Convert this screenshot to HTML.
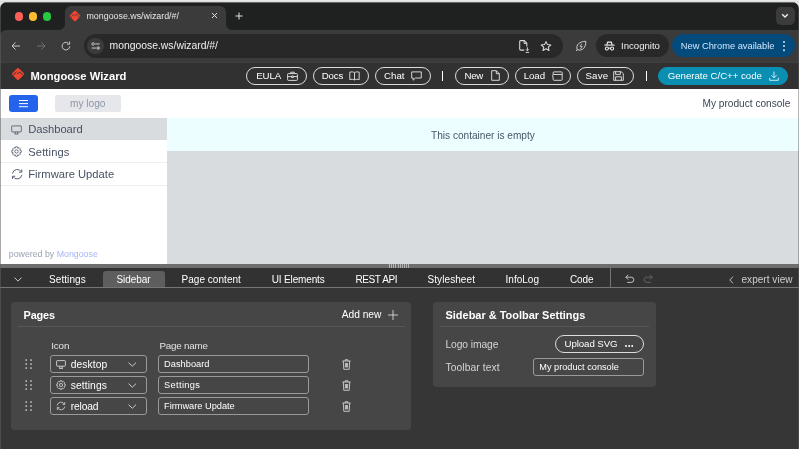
<!DOCTYPE html>
<html lang="en">
<head>
<meta charset="utf-8">
<title>Mongoose Wizard</title>
<style>
*{box-sizing:border-box;margin:0;padding:0}
html,body{width:799px;height:449px;overflow:hidden;background:linear-gradient(#e9e9e9 0 1px,#dcdcdc 1px 2px,#e4e4e4 2px);font-family:"Liberation Sans",sans-serif}
.abs{position:absolute}
#win{position:absolute;left:0;top:2px;width:799px;height:447px;background:#1f2120;border-radius:7px 7px 0 0;overflow:hidden}
#win:after{content:'';position:absolute;left:0;top:0;width:799px;height:1px;background:rgba(150,150,150,.62)}
.edge{position:absolute;top:0;width:1px;height:447px;background:rgba(95,95,95,.55)}
#shift{position:absolute;left:0;top:-2px;width:799px;height:449px;will-change:transform}
.t{position:absolute;white-space:nowrap;line-height:1}
svg{position:absolute;overflow:visible}
</style>
</head>
<body>
<div id="win"><div id="shift">
<div class="abs" style="left:14.75px;top:12px;width:8.5px;height:8.5px;border-radius:50%;background:#fe5f57"></div>
<div class="abs" style="left:28.75px;top:12px;width:8.5px;height:8.5px;border-radius:50%;background:#febc2e"></div>
<div class="abs" style="left:42.5px;top:12px;width:8.5px;height:8.5px;border-radius:50%;background:#28c840"></div>
<div class="abs" style="left:0px;top:29.5px;width:799px;height:32.5px;background:#3b3b3b;border-radius:6px 0 0 0"></div>
<div class="abs" style="left:64.5px;top:6px;width:161.0px;height:25px;background:#3b3b3b;border-radius:6px 6px 0 0"></div>
<svg style="left:58.5px;top:23.5px" width="6" height="6" viewBox="0 0 6 6"><path d="M6 0 V6 H0 A6 6 0 0 0 6 0Z" fill="#3b3b3b"/></svg>
<svg style="left:225.5px;top:23.5px" width="6" height="6" viewBox="0 0 6 6"><path d="M0 0 V6 H6 A6 6 0 0 1 0 0Z" fill="#3b3b3b"/></svg>
<svg style="left:69.45px;top:9.9px" width="12" height="12" viewBox="-6 -6 12 12"><rect x="-4.1" y="-4.1" width="8.2" height="8.2" rx="1.2" transform="rotate(45)" fill="#ee4630"/><path d="M-4.6 1.3 L-1.3 -1.8 M-0.8 0 L1.5 -1.8 L4.3 1" fill="none" stroke="#3b3b3b" stroke-width="0.9"/></svg>
<div class="t" style="left:86.5px;top:12.34px;font-size:8.85px;color:#e6e6e6;font-weight:normal;letter-spacing:0.001px;">mongoose.ws/wizard/#/</div>
<svg style="left:211px;top:12.3px" width="7" height="7" viewBox="0 0 7 7"><path d="M1 1 L6 6 M6 1 L1 6" stroke="#e0e0e0" stroke-width="1" fill="none"/></svg>
<svg style="left:235px;top:11.7px" width="8" height="8" viewBox="0 0 8 8"><path d="M4 0.5 V7.5 M0.5 4 H7.5" stroke="#e0e0e0" stroke-width="1" fill="none"/></svg>
<div class="abs" style="left:775.5px;top:6.5px;width:19.0px;height:18.5px;background:#3b3b3b;border-radius:5px"></div>
<svg style="left:781px;top:13px" width="8" height="6" viewBox="0 0 8 6"><path d="M1.2 1.2 L4 4 L6.8 1.2" fill="none" stroke="#eee" stroke-width="1.3"/></svg>
<svg style="left:9.8px;top:39.7px" width="12" height="12" viewBox="0 0 12 12"><path d="M10 6 H2.2 M5.6 2.4 L2 6 L5.6 9.6" fill="none" stroke="#cdcdcd" stroke-width="0.95"/></svg>
<svg style="left:35px;top:39.7px" width="12" height="12" viewBox="0 0 12 12"><path d="M2 6 H9.8 M6.4 2.4 L10 6 L6.4 9.6" fill="none" stroke="#727272" stroke-width="0.95"/></svg>
<svg style="left:60px;top:39.7px" width="12" height="12" viewBox="0 0 12 12"><path d="M9.7 6.3 A3.8 3.8 0 1 1 8.3 3.2" fill="none" stroke="#cdcdcd" stroke-width="0.95"/><path d="M9.6 1.6 V4.2 H7" fill="none" stroke="#cdcdcd" stroke-width="0.95"/></svg>
<div class="abs" style="left:84px;top:34px;width:479px;height:24px;background:#282828;border-radius:12px"></div>
<div class="abs" style="left:87.2px;top:37.6px;width:16.6px;height:16.6px;border-radius:50%;background:#3b3b3b"></div>
<svg style="left:90.8px;top:41.7px" width="9.4" height="8" viewBox="0 0 12 10"><circle cx="2.7" cy="2.4" r="1.6" fill="none" stroke="#e0e0e0" stroke-width="1"/><path d="M5.4 2.4 H11.2" stroke="#e0e0e0" stroke-width="1.1"/><circle cx="9.2" cy="7.6" r="1.6" fill="none" stroke="#e0e0e0" stroke-width="1"/><circle cx="9.2" cy="7.6" r="0.8" fill="#e0e0e0"/><path d="M0.8 7.6 H6.6" stroke="#e0e0e0" stroke-width="1.1"/></svg>
<div class="t" style="left:109.5px;top:41.49px;font-size:10.38px;color:#f0f0f0;font-weight:normal;letter-spacing:0.002px;">mongoose.ws/wizard/#/</div>
<svg style="left:518px;top:39px" width="13" height="15" viewBox="0 0 13 15"><path d="M8.8 7.4 V4.3 L6.3 1.6 H2.7 Q1.7 1.6 1.7 2.6 V10.1 Q1.7 11.1 2.7 11.1 H6.2" fill="none" stroke="#dcdcdc" stroke-width="1.05"/><path d="M6.1 1.8 V4.5 H8.7" fill="none" stroke="#dcdcdc" stroke-width="0.9"/><path d="M9.4 8.3 V11.6 M7.9 10.3 L9.4 11.8 L10.9 10.3 M7.7 13.4 H11.1" fill="none" stroke="#dcdcdc" stroke-width="0.95"/></svg>
<svg style="left:539.8px;top:39.8px" width="12" height="12" viewBox="0 0 12 12"><path d="M6 1.6 L7.4 4.6 L10.8 5 L8.3 7.2 L9 10.5 L6 8.8 L3 10.5 L3.7 7.2 L1.2 5 L4.6 4.6 Z" fill="none" stroke="#dcdcdc" stroke-width="1.05" stroke-linejoin="round"/></svg>
<svg style="left:574.7px;top:39.9px" width="12" height="12" viewBox="0 0 12 12"><path d="M2.2 9.6 C0.6 5 4.4 1.4 10.8 1.3 C11 7.8 7.2 11.4 2.2 9.6 Z M2.6 9.3 L1 11" fill="none" stroke="#cfcfcf" stroke-width="1"/><path d="M6.9 3.8 L5 6.4 H7.2 L5.4 9" fill="none" stroke="#cfcfcf" stroke-width="0.85"/></svg>
<div class="abs" style="left:596px;top:34px;width:72.5px;height:23.200000000000003px;background:#282828;border-radius:12px"></div>
<svg style="left:604.3px;top:40.9px" width="11" height="10" viewBox="0 0 11 10"><path d="M0.4 4.1 H10.6" fill="none" stroke="#eee" stroke-width="1.1"/><path d="M2.9 3.8 L3.6 1.2 H7.4 L8.1 3.8" fill="none" stroke="#eee" stroke-width="1.2" stroke-linejoin="round"/><circle cx="2.9" cy="7.5" r="1.55" fill="none" stroke="#eee" stroke-width="1.05"/><circle cx="8.1" cy="7.5" r="1.55" fill="none" stroke="#eee" stroke-width="1.05"/><path d="M4.4 7.1 H6.6" stroke="#eee" stroke-width="1"/></svg>
<div class="t" style="left:621px;top:41.42px;font-size:9.61px;color:#f0f0f0;font-weight:normal;letter-spacing:-0.000px;">Incognito</div>
<div class="abs" style="left:672px;top:34px;width:122.5px;height:23.200000000000003px;background:#044a7a;border-radius:12px"></div>
<div class="t" style="left:680.75px;top:42.08px;font-size:9.32px;color:#cfe6ff;font-weight:normal;letter-spacing:-0.001px;">New Chrome available</div>
<div class="abs" style="left:782.5px;top:40.8px;width:2.1px;height:2.1px;border-radius:1.1px;background:#cfe6ff;box-shadow:0 4.1px 0 #cfe6ff,0 8.2px 0 #cfe6ff"></div>
<div class="abs" style="left:0px;top:62px;width:799px;height:26.599999999999994px;background:#313131;border-top:1px solid #3f3f3f"></div>
<svg style="left:10.2px;top:66.45px" width="16" height="16" viewBox="-8 -8 16 16"><rect x="-4.7" y="-4.7" width="9.4" height="9.4" rx="1.5" transform="rotate(45)" fill="#ee4630"/><path d="M-5.25 1.45 L-1.5 -2.05 M-0.9 0 L1.7 -2.05 L4.9 1.15" fill="none" stroke="#313131" stroke-width="1"/></svg>
<div class="t" style="left:30.5px;top:70.76px;font-size:11.23px;color:#fff;font-weight:bold;letter-spacing:0.002px;">Mongoose Wizard</div>
<div class="abs" style="left:246px;top:67px;width:61px;height:17.5px;border-radius:9px;border:1px solid #dcdcdc"></div>
<div class="t" style="left:256.25px;top:70.77px;font-size:9.7px;color:#fff;font-weight:normal;letter-spacing:-0.147px;">EULA</div>
<div class="abs" style="left:312.5px;top:67px;width:56.5px;height:17.5px;border-radius:9px;border:1px solid #dcdcdc"></div>
<div class="t" style="left:321.75px;top:70.77px;font-size:9.7px;color:#fff;font-weight:normal;letter-spacing:-0.150px;">Docs</div>
<div class="abs" style="left:374.5px;top:67px;width:56.0px;height:17.5px;border-radius:9px;border:1px solid #dcdcdc"></div>
<div class="t" style="left:384px;top:70.77px;font-size:9.7px;color:#fff;font-weight:normal;letter-spacing:0.003px;">Chat</div>
<div class="abs" style="left:442px;top:70.5px;width:1px;height:10.5px;background:#fff;"></div>
<div class="abs" style="left:455px;top:67px;width:54px;height:17.5px;border-radius:9px;border:1px solid #dcdcdc"></div>
<div class="t" style="left:464.5px;top:70.77px;font-size:9.7px;color:#fff;font-weight:normal;letter-spacing:-0.302px;">New</div>
<div class="abs" style="left:514.5px;top:67px;width:56.5px;height:17.5px;border-radius:9px;border:1px solid #dcdcdc"></div>
<div class="t" style="left:523.75px;top:70.77px;font-size:9.7px;color:#fff;font-weight:normal;letter-spacing:-0.082px;">Load</div>
<div class="abs" style="left:576.5px;top:67px;width:57.0px;height:17.5px;border-radius:9px;border:1px solid #dcdcdc"></div>
<div class="t" style="left:585.5px;top:70.77px;font-size:9.7px;color:#fff;font-weight:normal;letter-spacing:0.160px;">Save</div>
<div class="abs" style="left:645.5px;top:70.5px;width:1.0px;height:10.5px;background:#fff;"></div>
<div class="abs" style="left:658px;top:67px;width:130px;height:17.5px;border-radius:9px;background:#0a8fb3;border:1px solid #0a8fb3"></div>
<div class="t" style="left:667.75px;top:70.77px;font-size:9.7px;color:#fff;font-weight:normal;letter-spacing:-0.034px;">Generate C/C++ code</div>
<svg style="left:287px;top:70.5px" width="11" height="10" viewBox="0 0 11 10"><rect x="0.6" y="2.6" width="9.8" height="6.8" rx="0.8" fill="none" stroke="#e8e8e8" stroke-width="0.9"/><path d="M3.8 2.6 V1.2 H7.2 V2.6 M0.6 5.6 H4.6 M6.4 5.6 H10.4 M4.6 5 H6.4 V6.6 H4.6Z" fill="none" stroke="#e8e8e8" stroke-width="0.9"/></svg>
<svg style="left:349px;top:70.5px" width="11" height="10" viewBox="0 0 11 10"><path d="M5.5 1.6 C4.4 0.8 2.4 0.7 0.8 1.2 V8.6 C2.4 8.1 4.4 8.2 5.5 9 C6.6 8.2 8.6 8.1 10.2 8.6 V1.2 C8.6 0.7 6.6 0.8 5.5 1.6 V9" fill="none" stroke="#e8e8e8" stroke-width="0.9"/></svg>
<svg style="left:410.5px;top:70.5px" width="11" height="10" viewBox="0 0 11 10"><path d="M0.7 0.9 H10.3 V7 H4.4 L2.2 9.2 V7 H0.7Z" fill="none" stroke="#e8e8e8" stroke-width="0.9" stroke-linejoin="round"/></svg>
<svg style="left:490.5px;top:70px" width="9" height="11" viewBox="0 0 9 11"><path d="M0.7 0.7 H5.3 L8.3 3.7 V10.3 H0.7Z M5.3 0.7 V3.7 H8.3" fill="none" stroke="#e8e8e8" stroke-width="0.9" stroke-linejoin="round"/></svg>
<svg style="left:551.5px;top:70.5px" width="11" height="10" viewBox="0 0 11 10"><path d="M1.2 3.5 V1.7 Q1.2 0.9 2 0.9 H9.4 Q10.2 0.9 10.2 1.7 V8.5 Q10.2 9.3 9.4 9.3 H2.1 Q1.3 9.3 1.2 8.5 L0.7 4.3 Q0.6 3.5 1.4 3.5 H10.2" fill="none" stroke="#e8e8e8" stroke-width="0.9" stroke-linejoin="round"/></svg>
<svg style="left:613.3px;top:70.5px" width="11" height="10" viewBox="0 0 11 10"><path d="M0.7 0.7 H8.3 L10.3 2.7 V9.3 H0.7Z M2.6 0.7 V3.4 H7.4 V0.7 M2.6 9.3 V5.8 H8.4 V9.3" fill="none" stroke="#e8e8e8" stroke-width="0.9" stroke-linejoin="round"/></svg>
<svg style="left:768.5px;top:70.5px" width="10" height="10" viewBox="0 0 10 10"><path d="M5 0.6 V6.6 M2.4 4.2 L5 6.8 L7.6 4.2 M0.7 6.8 V9.3 H9.3 V6.8" fill="none" stroke="#fff" stroke-width="0.8"/></svg>
<div class="abs" style="left:0px;top:88.6px;width:799px;height:29.400000000000006px;background:#fff;"></div>
<div class="abs" style="left:9px;top:95px;width:28.75px;height:17px;background:#2563eb;border-radius:3px"></div>
<div class="abs" style="left:18.75px;top:99.6px;width:9.25px;height:1px;background:#fff;box-shadow:0 3.1px 0 #fff,0 6.2px 0 #fff"></div>
<div class="abs" style="left:54.5px;top:95.25px;width:66.5px;height:16.25px;background:#e5e7eb;border-radius:2px"></div>
<div class="t" style="left:70px;top:98.62px;font-size:10.14px;color:#8d96a5;font-weight:normal;letter-spacing:-0.001px;">my logo</div>
<div class="t" style="left:702.5px;top:98.92px;font-size:10.15px;color:#3d4656;font-weight:normal;letter-spacing:-0.001px;">My product console</div>
<div class="abs" style="left:0px;top:118px;width:167px;height:146px;background:#fff;"></div>
<div class="abs" style="left:167px;top:118px;width:632px;height:146px;background:#d8dcdf;"></div>
<div class="abs" style="left:167px;top:118px;width:632px;height:33.400000000000006px;background:#ecfeff;"></div>
<div class="t" style="left:431px;top:130.64px;font-size:10.11px;color:#4a5568;font-weight:normal;letter-spacing:0.002px;">This container is empty</div>
<div class="abs" style="left:0px;top:118px;width:167px;height:22.19999999999999px;background:#d8dcdf;"></div>
<div class="abs" style="left:0px;top:162px;width:167px;height:1px;background:#eceef1;"></div>
<div class="abs" style="left:0px;top:184.7px;width:167px;height:1.0px;background:#eceef1;"></div>
<div class="t" style="left:28.25px;top:124.03px;font-size:11.2px;color:#465062;font-weight:normal;letter-spacing:-0.032px;">Dashboard</div>
<div class="t" style="left:28.25px;top:146.78px;font-size:11.2px;color:#465062;font-weight:normal;letter-spacing:0.098px;">Settings</div>
<div class="t" style="left:28.25px;top:169.28px;font-size:11.2px;color:#465062;font-weight:normal;letter-spacing:0.007px;">Firmware Update</div>
<svg style="left:11.4px;top:124.6px" width="11" height="10" viewBox="0 0 11 10"><rect x="0.7" y="0.9" width="9.6" height="6" rx="0.4" fill="none" stroke="#525c6e" stroke-width="0.85"/><path d="M3.6 9 H7.4 M4.2 6.9 V9 M6.8 6.9 V9" fill="none" stroke="#525c6e" stroke-width="0.85"/></svg>
<svg style="left:11.3px;top:146.1px" width="11" height="11" viewBox="0 0 11 11"><circle cx="5.5" cy="5.5" r="1.7" fill="none" stroke="#525c6e" stroke-width="0.85"/><path d="M4.6 0.8 H6.4 L6.8 2.2 L8.1 1.6 L9.4 2.9 L8.8 4.2 L10.2 4.6 V6.4 L8.8 6.8 L9.4 8.1 L8.1 9.4 L6.8 8.8 L6.4 10.2 H4.6 L4.2 8.8 L2.9 9.4 L1.6 8.1 L2.2 6.8 L0.8 6.4 V4.6 L2.2 4.2 L1.6 2.9 L2.9 1.6 L4.2 2.2Z" fill="none" stroke="#525c6e" stroke-width="0.85" stroke-linejoin="round"/></svg>
<svg style="left:10.8px;top:168.3px" width="12.4" height="12.4" viewBox="0 0 11 11"><path d="M1.3 4.9 A4.3 4.3 0 0 1 9.3 3.5 M9.7 6.1 A4.3 4.3 0 0 1 1.7 7.5" fill="none" stroke="#525c6e" stroke-width="0.85"/><path d="M9.6 1.3 V3.7 H7.2 M1.4 9.7 V7.3 H3.8" fill="none" stroke="#525c6e" stroke-width="0.85"/></svg>
<div class="t" style="left:8.75px;top:250.12px;font-size:8.8px;color:#9aa2b1">powered by <span style="color:#a5b4fc">Mongoose</span></div>
<div class="abs" style="left:0px;top:263.8px;width:799px;height:4.199999999999989px;background:#6e6e6e;"></div>
<div class="abs" style="left:389px;top:264px;width:21.4px;height:3.8px;background:repeating-linear-gradient(90deg,#b4b4b4 0 1.07px,transparent 1.07px 2.14px)"></div>
<div class="abs" style="left:0px;top:268px;width:799px;height:20px;background:#323232;border-bottom:1px solid #767676"></div>
<div class="abs" style="left:0px;top:288px;width:799px;height:161px;background:#363636;"></div>
<div class="abs" style="left:103px;top:271.3px;width:61.5px;height:15.699999999999989px;background:#5e5e5e;border-radius:3px 3px 0 0"></div>
<div class="t" style="left:49px;top:275.30px;font-size:10px;color:#fff;font-weight:normal;letter-spacing:0.077px;">Settings</div>
<div class="t" style="left:116.5px;top:275.30px;font-size:10px;color:#fff;font-weight:normal;letter-spacing:-0.067px;">Sidebar</div>
<div class="t" style="left:181.5px;top:275.30px;font-size:10px;color:#fff;font-weight:normal;letter-spacing:0.039px;">Page content</div>
<div class="t" style="left:271.7px;top:275.30px;font-size:10px;color:#fff;font-weight:normal;letter-spacing:-0.142px;">UI Elements</div>
<div class="t" style="left:355.4px;top:275.30px;font-size:10px;color:#fff;font-weight:normal;letter-spacing:-0.392px;">REST API</div>
<div class="t" style="left:427.5px;top:275.30px;font-size:10px;color:#fff;font-weight:normal;letter-spacing:0.081px;">Stylesheet</div>
<div class="t" style="left:505.5px;top:275.30px;font-size:10px;color:#fff;font-weight:normal;letter-spacing:0.019px;">InfoLog</div>
<div class="t" style="left:570px;top:275.30px;font-size:10px;color:#fff;font-weight:normal;letter-spacing:-0.102px;">Code</div>
<svg style="left:14px;top:276.5px" width="8" height="5" viewBox="0 0 8 5"><path d="M0.5 0.6 L4 4.1 L7.5 0.6" fill="none" stroke="#d8d8d8" stroke-width="0.9"/></svg>
<div class="abs" style="left:610px;top:268px;width:1px;height:19.5px;background:#767676;"></div>
<svg style="left:625px;top:274px" width="10" height="9" viewBox="0 0 10 9"><path d="M3.2 0.8 L0.8 3.2 L3.2 5.6 M0.8 3.2 H6.2 A2.6 2.6 0 0 1 6.2 8.4 H2.2" fill="none" stroke="#d0d0d0" stroke-width="0.9"/></svg>
<svg style="left:643px;top:274px" width="10" height="9" viewBox="0 0 10 9"><path d="M6.8 0.8 L9.2 3.2 L6.8 5.6 M9.2 3.2 H3.8 A2.6 2.6 0 0 0 3.8 8.4 H7.8" fill="none" stroke="#666" stroke-width="0.9"/></svg>
<svg style="left:728.5px;top:275.5px" width="5" height="8" viewBox="0 0 5 8"><path d="M4 0.6 L0.8 4 L4 7.4" fill="none" stroke="#cfcfcf" stroke-width="0.9"/></svg>
<div class="t" style="left:741.5px;top:275.30px;font-size:10px;color:#cfcfcf;font-weight:normal;letter-spacing:0.039px;">expert view</div>
<div class="abs" style="left:11.3px;top:301.5px;width:400.2px;height:128.3px;background:#464646;border-radius:4px"></div>
<div class="t" style="left:23.5px;top:309.80px;font-size:10.9px;color:#fff;font-weight:bold;letter-spacing:-0.123px;">Pages</div>
<div class="abs" style="left:18px;top:326.4px;width:386.7px;height:1.0px;background:#575757;"></div>
<div class="t" style="left:341.7px;top:310.39px;font-size:10.2px;color:#fff;font-weight:normal;letter-spacing:0.001px;">Add new</div>
<svg style="left:388.1px;top:309.6px" width="10" height="10" viewBox="0 0 10 10"><path d="M5 0 V10 M0 5 H10" stroke="#e8e8e8" stroke-width="0.8" fill="none"/></svg>
<div class="t" style="left:51.25px;top:341.31px;font-size:9.8px;color:#e4e4e4;font-weight:normal;letter-spacing:-0.131px;">Icon</div>
<div class="t" style="left:159.5px;top:341.31px;font-size:9.8px;color:#e4e4e4;font-weight:normal;letter-spacing:-0.203px;">Page name</div>
<div class="abs" style="left:49.5px;top:355px;width:97.5px;height:18.19999999999999px;background:transparent;border:1px solid #9a9a9a;border-radius:3px"></div>
<div class="abs" style="left:158px;top:355px;width:151px;height:18.19999999999999px;background:transparent;border:1px solid #9a9a9a;border-radius:3px"></div>
<div class="t" style="left:70.8px;top:359.73px;font-size:10.3px;color:#fff;font-weight:normal;letter-spacing:0.054px;">desktop</div>
<div class="t" style="left:164px;top:360.32px;font-size:9.25px;color:#fff;font-weight:normal;letter-spacing:0.028px;">Dashboard</div>
<svg style="left:128px;top:362.2px" width="9" height="5" viewBox="0 0 9 5"><path d="M0.5 0.6 L4.3 4.2 L8.1 0.6" fill="none" stroke="#d8d8d8" stroke-width="0.9"/></svg>
<svg style="left:24px;top:358.2px" width="10" height="12" viewBox="0 0 10 12"><circle cx="2.2" cy="2.0" r="0.85" fill="#e0e0e0"/><circle cx="2.2" cy="6.0" r="0.85" fill="#e0e0e0"/><circle cx="2.2" cy="10.0" r="0.85" fill="#e0e0e0"/><circle cx="7.0" cy="2.0" r="0.85" fill="#e0e0e0"/><circle cx="7.0" cy="6.0" r="0.85" fill="#e0e0e0"/><circle cx="7.0" cy="10.0" r="0.85" fill="#e0e0e0"/></svg>
<svg style="left:342.4px;top:358.7px" width="9" height="11" viewBox="0 0 9 11"><path d="M0.4 2 H8.6 M3.2 2 V0.7 H5.8 V2 M1.3 2 L1.8 10.3 H7.2 L7.7 2 M3.4 4 V8.4 M4.5 4 V8.4 M5.6 4 V8.4" fill="none" stroke="#e0e0e0" stroke-width="0.8"/></svg>
<div class="abs" style="left:49.5px;top:376px;width:97.5px;height:18.19999999999999px;background:transparent;border:1px solid #9a9a9a;border-radius:3px"></div>
<div class="abs" style="left:158px;top:376px;width:151px;height:18.19999999999999px;background:transparent;border:1px solid #9a9a9a;border-radius:3px"></div>
<div class="t" style="left:70.8px;top:380.73px;font-size:10.3px;color:#fff;font-weight:normal;letter-spacing:0.088px;">settings</div>
<div class="t" style="left:164px;top:381.32px;font-size:9.25px;color:#fff;font-weight:normal;letter-spacing:0.360px;">Settings</div>
<svg style="left:128px;top:383.2px" width="9" height="5" viewBox="0 0 9 5"><path d="M0.5 0.6 L4.3 4.2 L8.1 0.6" fill="none" stroke="#d8d8d8" stroke-width="0.9"/></svg>
<svg style="left:24px;top:379.2px" width="10" height="12" viewBox="0 0 10 12"><circle cx="2.2" cy="2.0" r="0.85" fill="#e0e0e0"/><circle cx="2.2" cy="6.0" r="0.85" fill="#e0e0e0"/><circle cx="2.2" cy="10.0" r="0.85" fill="#e0e0e0"/><circle cx="7.0" cy="2.0" r="0.85" fill="#e0e0e0"/><circle cx="7.0" cy="6.0" r="0.85" fill="#e0e0e0"/><circle cx="7.0" cy="10.0" r="0.85" fill="#e0e0e0"/></svg>
<svg style="left:342.4px;top:379.7px" width="9" height="11" viewBox="0 0 9 11"><path d="M0.4 2 H8.6 M3.2 2 V0.7 H5.8 V2 M1.3 2 L1.8 10.3 H7.2 L7.7 2 M3.4 4 V8.4 M4.5 4 V8.4 M5.6 4 V8.4" fill="none" stroke="#e0e0e0" stroke-width="0.8"/></svg>
<div class="abs" style="left:49.5px;top:397px;width:97.5px;height:18.19999999999999px;background:transparent;border:1px solid #9a9a9a;border-radius:3px"></div>
<div class="abs" style="left:158px;top:397px;width:151px;height:18.19999999999999px;background:transparent;border:1px solid #9a9a9a;border-radius:3px"></div>
<div class="t" style="left:70.8px;top:401.73px;font-size:10.3px;color:#fff;font-weight:normal;letter-spacing:-0.172px;">reload</div>
<div class="t" style="left:164px;top:402.32px;font-size:9.25px;color:#fff;font-weight:normal;letter-spacing:-0.016px;">Firmware Update</div>
<svg style="left:128px;top:404.2px" width="9" height="5" viewBox="0 0 9 5"><path d="M0.5 0.6 L4.3 4.2 L8.1 0.6" fill="none" stroke="#d8d8d8" stroke-width="0.9"/></svg>
<svg style="left:24px;top:400.2px" width="10" height="12" viewBox="0 0 10 12"><circle cx="2.2" cy="2.0" r="0.85" fill="#e0e0e0"/><circle cx="2.2" cy="6.0" r="0.85" fill="#e0e0e0"/><circle cx="2.2" cy="10.0" r="0.85" fill="#e0e0e0"/><circle cx="7.0" cy="2.0" r="0.85" fill="#e0e0e0"/><circle cx="7.0" cy="6.0" r="0.85" fill="#e0e0e0"/><circle cx="7.0" cy="10.0" r="0.85" fill="#e0e0e0"/></svg>
<svg style="left:342.4px;top:400.7px" width="9" height="11" viewBox="0 0 9 11"><path d="M0.4 2 H8.6 M3.2 2 V0.7 H5.8 V2 M1.3 2 L1.8 10.3 H7.2 L7.7 2 M3.4 4 V8.4 M4.5 4 V8.4 M5.6 4 V8.4" fill="none" stroke="#e0e0e0" stroke-width="0.8"/></svg>
<svg style="left:56px;top:359.7px" width="10" height="9" viewBox="0 0 10 9"><rect x="0.6" y="0.6" width="8.8" height="5.6" rx="0.7" fill="none" stroke="#e8e8e8" stroke-width="0.8"/><path d="M3.2 8.4 H6.8 M3.8 6.2 V8.4 M6.2 6.2 V8.4" fill="none" stroke="#e8e8e8" stroke-width="0.8"/></svg>
<svg style="left:56px;top:380.2px" width="10" height="10" viewBox="0 0 11 11"><circle cx="5.5" cy="5.5" r="1.7" fill="none" stroke="#e8e8e8" stroke-width="0.8"/><path d="M4.6 0.8 H6.4 L6.8 2.2 L8.1 1.6 L9.4 2.9 L8.8 4.2 L10.2 4.6 V6.4 L8.8 6.8 L9.4 8.1 L8.1 9.4 L6.8 8.8 L6.4 10.2 H4.6 L4.2 8.8 L2.9 9.4 L1.6 8.1 L2.2 6.8 L0.8 6.4 V4.6 L2.2 4.2 L1.6 2.9 L2.9 1.6 L4.2 2.2Z" fill="none" stroke="#e8e8e8" stroke-width="0.8" stroke-linejoin="round"/></svg>
<svg style="left:56px;top:401.2px" width="10" height="10" viewBox="0 0 11 11"><path d="M1.3 4.9 A4.3 4.3 0 0 1 9.3 3.5 M9.7 6.1 A4.3 4.3 0 0 1 1.7 7.5" fill="none" stroke="#e8e8e8" stroke-width="0.8"/><path d="M9.6 1.3 V3.7 H7.2 M1.4 9.7 V7.3 H3.8" fill="none" stroke="#e8e8e8" stroke-width="0.8"/></svg>
<div class="abs" style="left:433px;top:301.5px;width:223.20000000000005px;height:85.19999999999999px;background:#464646;border-radius:4px"></div>
<div class="t" style="left:445.5px;top:309.56px;font-size:10.96px;color:#fff;font-weight:bold;letter-spacing:0.002px;">Sidebar &amp; Toolbar Settings</div>
<div class="abs" style="left:439.8px;top:326.4px;width:209.2px;height:1.0px;background:#575757;"></div>
<div class="t" style="left:445.5px;top:339.73px;font-size:10.3px;color:#d4d4d4;font-weight:normal;letter-spacing:-0.103px;">Logo image</div>
<div class="t" style="left:445.5px;top:362.73px;font-size:10.3px;color:#d4d4d4;font-weight:normal;letter-spacing:0.080px;">Toolbar text</div>
<div class="abs" style="left:555px;top:334.6px;width:89.20000000000005px;height:18.099999999999966px;background:transparent;border:1px solid #dcdcdc;border-radius:9.5px"></div>
<div class="t" style="left:564.5px;top:338.77px;font-size:9.7px;color:#fff;font-weight:normal;letter-spacing:-0.082px;">Upload SVG</div>
<div class="abs" style="left:625.4px;top:345.3px;width:2px;height:2px;border-radius:1px;background:#fff;box-shadow:3.1px 0 0 #fff,6.2px 0 0 #fff"></div>
<div class="abs" style="left:532.6px;top:358.3px;width:111.60000000000002px;height:17.69999999999999px;background:transparent;border:1px solid #9a9a9a;border-radius:3px"></div>
<div class="t" style="left:539.3px;top:363.45px;font-size:9.19px;color:#fff;font-weight:normal;letter-spacing:0.001px;">My product console</div>
</div><div class="edge" style="left:0"></div><div class="edge" style="right:0;background:rgba(95,95,95,.45)"></div></div>
</body>
</html>
